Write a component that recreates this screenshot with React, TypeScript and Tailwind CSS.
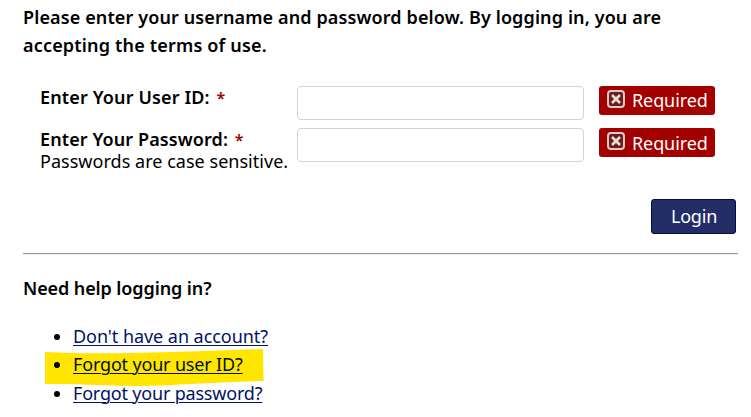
type FieldRowProps = {
  id: string;
  label: string;
  labelClass: string;
  badgeClass: string;
  type: string;
  hint?: string;
};

function RequiredBadge({ className }: { className: string }) {
  return (
    <div className="flex h-[29px] w-[116px] items-start rounded-[3px] bg-[#a30000] pl-2 text-white">
      <svg width="18" height="18" viewBox="0 0 18 18" fill="none" className="mt-[4px] shrink-0">
        <rect x="1" y="1" width="16" height="16" rx="3" fill="#701c1c" stroke="#dccaca" strokeWidth="2" />
        <path d="M5 5l8 8M13 5l-8 8" stroke="#e9dede" strokeWidth="2.6" />
      </svg>
      <span className={`ml-[7px] text-[18px] leading-[28px] tracking-[-0.1px] ${className}`}>Required</span>
    </div>
  );
}

function FieldRow({ id, label, labelClass, badgeClass, type, hint }: FieldRowProps) {
  return (
    <div className="flex h-[42px] items-start">
      <div className="w-[257px] whitespace-nowrap text-[18px] leading-[22px]">
        <label htmlFor={id} className={`block font-semibold ${labelClass}`}>
          {label} <span className="ml-[2px] text-[16px] leading-none text-[#a30000]">*</span>
        </label>
        {hint && <span className="block tracking-[0.03px]">{hint}</span>}
      </div>
      <input
        id={id}
        type={type}
        className="h-[34px] w-[287px] rounded-[4px] border border-[#d3d3d3] bg-white px-2 outline-none"
      />
      <div className="ml-[15px]">
        <RequiredBadge className={badgeClass} />
      </div>
    </div>
  );
}

export default function App() {
  return (
    <div className="h-[417px] w-[751px] overflow-hidden bg-white pl-[23px] pt-[3px] font-['Noto_Sans',sans-serif] text-[18px] text-black">
      <p className="whitespace-nowrap font-semibold leading-[28px]">
        <span className="tracking-[0.12px]">
          Please enter your username and password below. By logging in, you are
        </span>
        <br />
        <span className="tracking-[0.18px]">accepting the terms of use.</span>
      </p>

      <form className="mt-[27px] pl-[17px]">
        <FieldRow
          id="user-id"
          label="Enter Your User ID:"
          labelClass="tracking-[0.14px]"
          badgeClass="mt-0"
          type="text"
        />
        <FieldRow
          id="password"
          label="Enter Your Password:"
          labelClass="tracking-[0.1px]"
          badgeClass="mt-px"
          type="password"
          hint="Passwords are case sensitive."
        />
        <div className="mt-[29px] flex justify-end pr-[15px]">
          <button
            type="button"
            className="h-[35px] w-[85px] rounded-[3px] border border-[#080d3c] bg-[#232e66] pl-px text-[18px] leading-[33px] tracking-[-0.2px] text-white"
          >
            Login
          </button>
        </div>
      </form>

      <hr className="mt-[19px] h-[2px] w-[715px] border-0 border-t border-[#999999] bg-[#eeeeee]" />

      <h2 className="mt-[19px] font-semibold leading-[28px] tracking-[-0.1px]">Need help logging in?</h2>

      <ul className="mt-[20px] whitespace-nowrap text-[#00126b]">
        <li className="flex h-[28px] items-center pl-[31px]">
          <span className="mr-[13px] mt-px size-[6px] rounded-full bg-black" />
          <a href="#" className="tracking-[-0.05px] underline decoration-1 underline-offset-2">
            Don't have an account?
          </a>
        </li>
        <li className="relative flex h-[29px] items-center pl-[31px]">
          <svg className="absolute left-[22px] top-[-2px]" width="220" height="40" viewBox="0 0 220 40">
            <path d="M0 4C55 7 125 4 218 1L218.500 33C165 34 125 38 85 38C55 37 28 36 0 36Z" fill="#ffe500" />
          </svg>
          <span className="relative mr-[13px] mt-px size-[6px] rounded-full bg-black" />
          <a
            href="#"
            className="relative tracking-[-0.17px] text-[#001200] underline decoration-1 underline-offset-2"
          >
            Forgot your user ID?
          </a>
        </li>
        <li className="flex h-[28px] items-center pl-[31px]">
          <span className="mr-[13px] mt-px size-[6px] rounded-full bg-black" />
          <a href="#" className="tracking-[-0.19px] underline decoration-1 underline-offset-2">
            Forgot your password?
          </a>
        </li>
      </ul>
    </div>
  );
}
